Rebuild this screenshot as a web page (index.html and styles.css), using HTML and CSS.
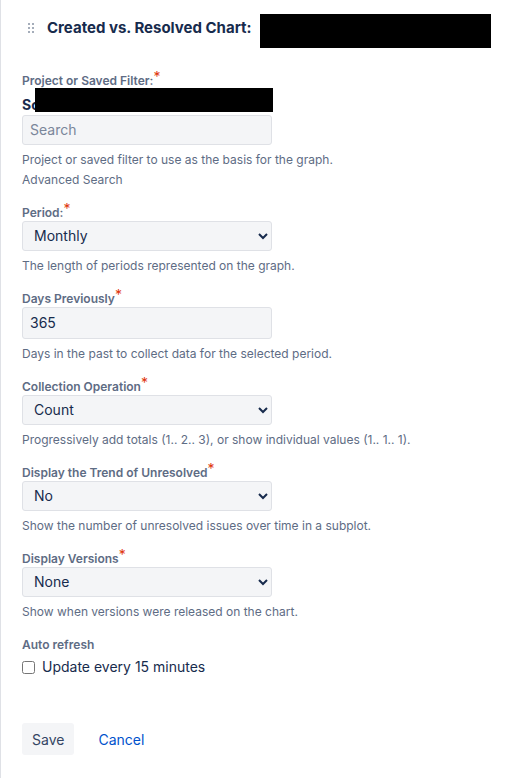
FILE: index.html
```html
<!DOCTYPE html>
<html lang="en">
<head>
  <meta charset="UTF-8">
  <title>Created vs. Resolved Chart</title>
  <meta name="viewport" content="width=device-width, initial-scale=1.0">
  <link rel="stylesheet" href="styles.css">
</head>
<body>

  <main class="gadget">
    <header class="gadget-header">
      <svg class="drag-handle" width="8" height="12" viewBox="0 0 8 12" aria-hidden="true">
        <path fill="#a5adba" d="M1 1h2v2H1zM5 1h2v2H5zM1 5h2v2H1zM5 5h2v2H5zM1 9h2v2H1zM5 9h2v2H5z"/>
      </svg>
      <h1>Created vs. Resolved Chart:</h1>
      <span class="redacted title-redacted"></span>
    </header>

    <form class="gadget-form">
      <div class="field">
        <label for="project">Project or Saved Filter:<span class="required">*</span></label>
        <div class="current-filter">Sc<span class="redacted filter-redacted"></span></div>
        <input type="text" id="project" class="search" placeholder="Search">
        <p class="description">Project or saved filter to use as the basis for the graph.</p>
        <a href="#" class="advanced">Advanced Search</a>
      </div>

      <div class="field">
        <label for="period">Period:<span class="required">*</span></label>
        <select id="period">
          <option>Hourly</option>
          <option>Daily</option>
          <option>Weekly</option>
          <option selected>Monthly</option>
          <option>Quarterly</option>
          <option>Yearly</option>
        </select>
        <p class="description">The length of periods represented on the graph.</p>
      </div>

      <div class="field">
        <label for="days">Days Previously<span class="required">*</span></label>
        <input type="text" id="days" value="365">
        <p class="description">Days in the past to collect data for the selected period.</p>
      </div>

      <div class="field">
        <label for="operation">Collection Operation<span class="required">*</span></label>
        <select id="operation">
          <option>Cumulative</option>
          <option selected>Count</option>
        </select>
        <p class="description">Progressively add totals (1.. 2.. 3), or show individual values (1.. 1.. 1).</p>
      </div>

      <div class="field">
        <label for="trend">Display the Trend of Unresolved<span class="required">*</span></label>
        <select id="trend">
          <option>Yes</option>
          <option selected>No</option>
        </select>
        <p class="description">Show the number of unresolved issues over time in a subplot.</p>
      </div>

      <div class="field">
        <label for="versions">Display Versions<span class="required">*</span></label>
        <select id="versions">
          <option>All versions</option>
          <option>Only major versions</option>
          <option selected>None</option>
        </select>
        <p class="description">Show when versions were released on the chart.</p>
      </div>

      <fieldset class="refresh">
        <legend>Auto refresh</legend>
        <div class="check">
          <input type="checkbox" id="refresh">
          <label for="refresh">Update every 15 minutes</label>
        </div>
      </fieldset>

      <div class="buttons">
        <button type="submit" class="save">Save</button>
        <button type="button" class="cancel">Cancel</button>
      </div>
    </form>
  </main>

</body>
</html>
```

FILE: styles.css
```css
* {
  box-sizing: border-box;
}
body {
  margin: 0;
  background: #fff;
  color: #172b4d;
  font-family: Inter, sans-serif;
  font-size: 14px;
  line-height: 20px;
}
.gadget {
  min-height: 100vh;
  padding: 14px 24px 23px 21px;
  border-left: 1px solid #dfe1e6;
}
.gadget-header {
  display: flex;
  align-items: flex-start;
  padding-left: 5px;
}
.drag-handle {
  flex: none;
  margin: 8px 12px 0 0;
}
h1 {
  margin: 4px 0 0;
  font-size: 15px;
  font-weight: 700;
  line-height: 20px;
  white-space: nowrap;
}
.redacted {
  background: #000;
}
.title-redacted {
  width: 231px;
  height: 34px;
  margin-left: auto;
}
.gadget-form {
  margin-top: 25px;
}
.field {
  display: flex;
  flex-direction: column;
  align-items: flex-start;
  margin-bottom: 17px;
}
.field label,
legend {
  color: #5e6c84;
  font-size: 12px;
  font-weight: 600;
  line-height: 16px;
}
.required {
  position: relative;
  top: -3px;
  color: #de350b;
  font-size: 14px;
  font-weight: 400;
  line-height: 1;
}
.current-filter {
  position: relative;
  height: 26px;
  padding-top: 6px;
  font-weight: 700;
}
/* covers the name of the selected filter */
.filter-redacted {
  position: absolute;
  top: -1px;
  left: 13px;
  width: 238px;
  height: 24px;
}
input[type="text"],
select {
  width: 250px;
  max-width: 100%;
  height: 30px;
  padding: 0 7px 1px;
  border: 1px solid #dfe1e6;
  border-radius: 3px;
  background-color: #f4f5f7;
  color: #172b4d;
  font-family: inherit;
  font-size: 14px;
}
input[type="text"] {
  height: 32px;
}
input.search[type="text"] {
  height: 30px;
}
input::placeholder {
  color: #7a869a;
}
select {
  padding: 0 0 1px 7px;
}
.description {
  margin: 7px 0 0;
  color: #5e6c84;
  font-size: 12px;
  line-height: 16px;
}
.advanced {
  margin-top: 4px;
  color: #5e6c84;
  font-size: 12px;
  line-height: 16px;
  text-decoration: none;
}
.refresh {
  margin: 0;
  padding: 0;
  border: 0;
}
legend {
  padding: 0;
}
.check {
  display: flex;
  align-items: center;
  gap: 7px;
  margin-top: 4px;
}
.check input {
  width: 13px;
  height: 13px;
  margin: 0;
}
.buttons {
  display: flex;
  gap: 14px;
  margin-top: 46px;
}
.buttons button {
  height: 32px;
  padding: 0 10px;
  border: 0;
  border-radius: 3px;
  font-family: inherit;
  font-size: 14px;
}
.save {
  background: #f4f5f7;
  color: #344563;
}
.cancel {
  background: none;
  color: #0052cc;
}
```
